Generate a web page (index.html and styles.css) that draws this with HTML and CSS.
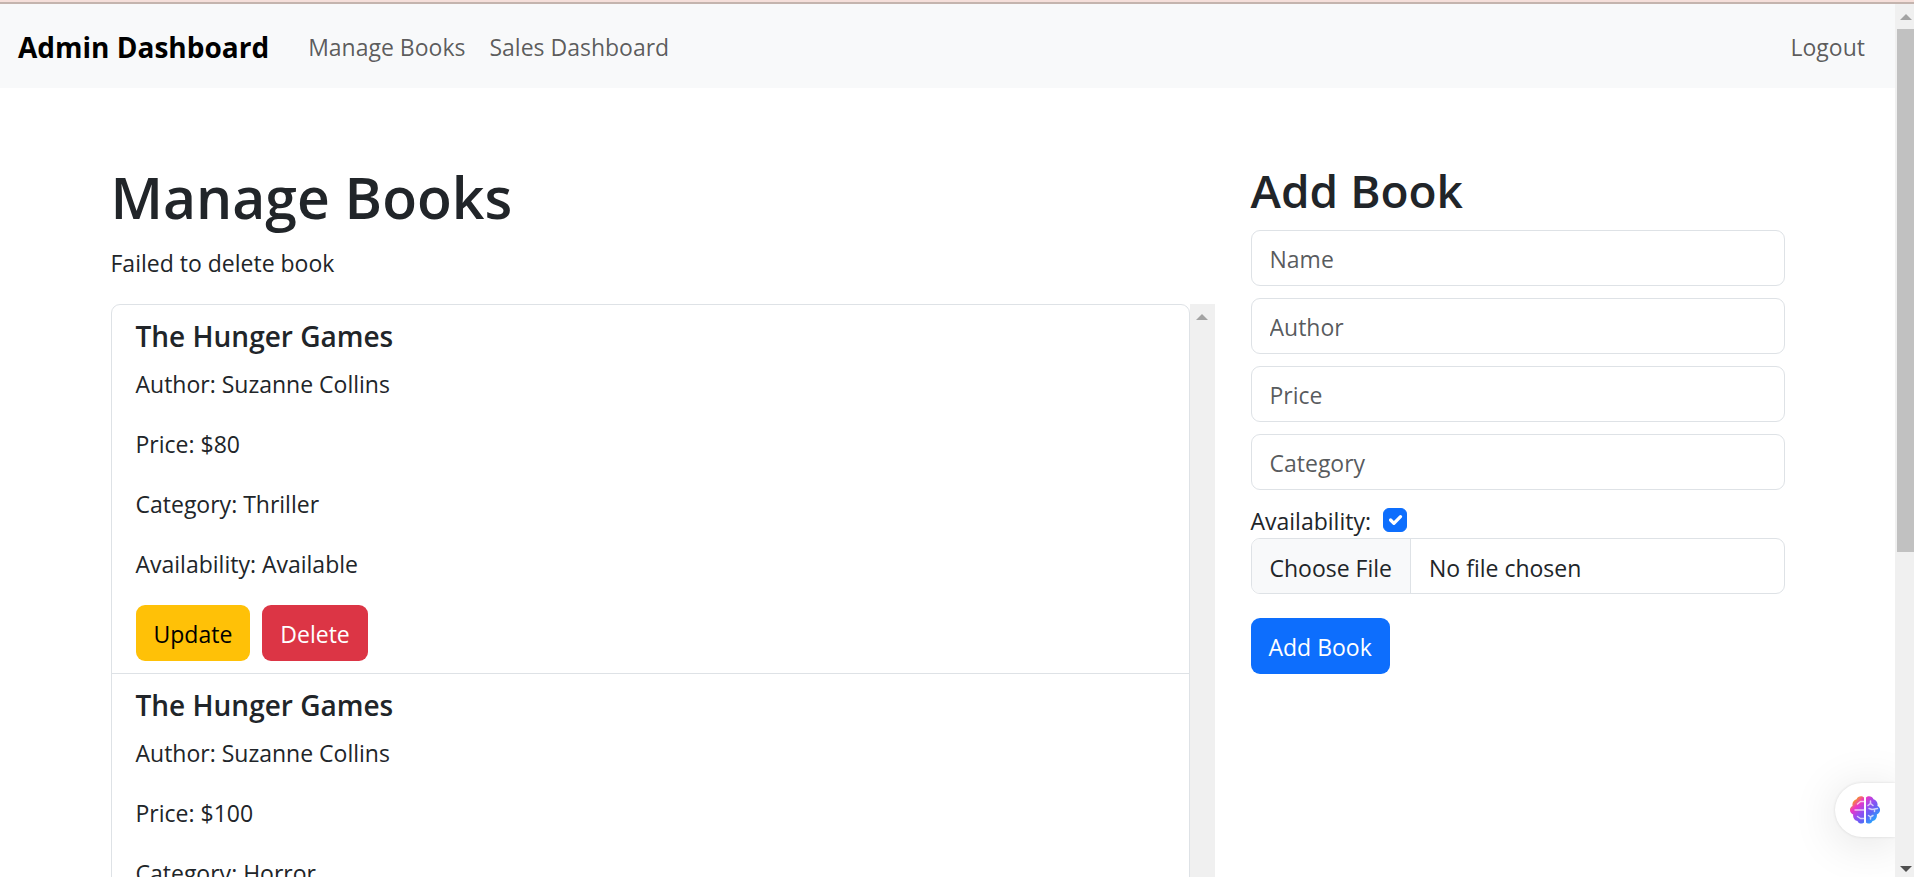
FILE: index.html
```html
<!DOCTYPE html>
<html lang="en">
<head>
<meta charset="utf-8">
<title>Admin Dashboard</title>
<link rel="stylesheet" href="styles.css">
</head>
<body>
<div class="frame-edge"></div>
<div class="viewport">
  <div class="page">
    <nav class="navbar">
      <a class="brand" href="#">Admin Dashboard</a>
      <a class="nav-link" href="#">Manage Books</a>
      <a class="nav-link" href="#">Sales Dashboard</a>
      <a class="nav-link nav-end" href="#">Logout</a>
    </nav>
    <main class="container">
      <section class="books">
        <h1>Manage Books</h1>
        <p>Failed to delete book</p>
        <div class="scroll-area">
          <ul class="list">
            <li class="item">
              <h5>The Hunger Games</h5>
              <p>Author: Suzanne Collins</p>
              <p>Price: $80</p>
              <p>Category: Thriller</p>
              <p>Availability: Available</p>
              <div class="actions">
                <button class="btn btn-warning" type="button">Update</button>
                <button class="btn btn-danger" type="button">Delete</button>
              </div>
            </li>
            <li class="item">
              <h5>The Hunger Games</h5>
              <p>Author: Suzanne Collins</p>
              <p>Price: $100</p>
              <p>Category: Horror</p>
              <p>Availability: Available</p>
              <div class="actions">
                <button class="btn btn-warning" type="button">Update</button>
                <button class="btn btn-danger" type="button">Delete</button>
              </div>
            </li>
          </ul>
          <div class="scrollbar list-scrollbar"><span class="arrow arrow-up"></span></div>
        </div>
      </section>
      <section class="add">
        <h2>Add Book</h2>
        <form class="form">
          <input class="control" type="text" placeholder="Name" aria-label="Name">
          <input class="control" type="text" placeholder="Author" aria-label="Author">
          <input class="control" type="text" placeholder="Price" aria-label="Price">
          <input class="control" type="text" placeholder="Category" aria-label="Category">
          <div class="check-row">
            <label for="available">Availability:</label>
            <input class="check" id="available" type="checkbox" checked>
          </div>
          <input class="control file" type="file" aria-label="Book image">
          <button class="btn btn-primary" type="submit">Add Book</button>
        </form>
      </section>
    </main>
    <button class="assistant" type="button" aria-label="Assistant">
      <svg width="30" height="28" viewBox="0 0 30 28" aria-hidden="true">
        <defs>
          <linearGradient id="g" x1="4" y1="2" x2="26" y2="25" gradientUnits="userSpaceOnUse">
            <stop offset="0.04" stop-color="#f79a1e"/>
            <stop offset="0.24" stop-color="#ee35c4"/>
            <stop offset="0.48" stop-color="#9a4df0"/>
            <stop offset="0.7" stop-color="#5f63f5"/>
            <stop offset="1" stop-color="#1fb0ff"/>
          </linearGradient>
        </defs>
        <path fill="url(#g)" d="M14 1.500V26.500C12.500 28.300 8.500 28 7.500 25C4.500 24.500 2.500 21.500 3.200 18.500C-1 16.500-1 11.500 2.600 10C1.800 7 3.600 4 6.500 3.300C7.500 0 12-.8 14 1.500ZM16 1.500C18-.8 22.500 0 23.500 3.300C26.400 4 28.200 7 27.400 10C31 11.500 31 16.500 26.800 18.500C27.500 21.500 25.500 24.500 22.500 25C21.500 28 17.500 28.300 16 26.500Z"/>
        <g fill="none" stroke="#fff" stroke-opacity=".7" stroke-width="1.500" stroke-linecap="round" stroke-linejoin="round">
          <path d="M14 5.500H10.500L7.500 8M14 14H5M14 22.500H10.500L7.500 20.500M20.500 5V7.500M18 9.500L20.500 7.500L23 9.500M19 12.500L22 13.500L27.500 12.500M24.500 13.500V15.500M20.500 23V21L18.500 19.500M20.500 21L23 19.500"/>
        </g>
      </svg>
    </button>
  </div>
  <div class="scrollbar page-scrollbar">
    <span class="arrow arrow-up"></span>
    <span class="thumb"></span>
    <span class="arrow arrow-down"></span>
  </div>
</div>
</body>
</html>
```
FILE: styles.css
```css
* { box-sizing: border-box; }

body {
  margin: 0;
  height: 100vh;
  overflow: hidden;
  display: flex;
  flex-direction: column;
  font: 400 23px/38px "Open Sans", "Noto Sans", sans-serif;
  color: #212529;
  background: #fff;
}

h1, h2, h5, p { margin: 0; }
h1, h2, h5 { font-weight: 600; margin-bottom: 10px; }
h1 { font-size: 57px; line-height: 74px; }
h2 { font-size: 46px; line-height: 60px; }
h5 { font-size: 28px; line-height: 38px; }
p { margin-bottom: 22px; }

.frame-edge {
  flex: none;
  height: 4px;
  background: #f5dfda;
  border-bottom: 2px solid #c4b4ae;
}

.viewport { flex: 1; min-height: 0; display: flex; }
.page { flex: 1; min-width: 0; position: relative; overflow: hidden; }

.navbar {
  display: flex;
  align-items: center;
  height: 84px;
  padding: 2px 18px 0;
  background: #f8f9fa;
}
.brand {
  margin-right: 27px;
  font-size: 28px;
  font-weight: 700;
  color: #000;
  text-decoration: none;
}
.nav-link { padding: 0 12px; color: rgba(0, 0, 0, .65); text-decoration: none; }
.nav-end { margin-left: auto; }

.container {
  display: grid;
  grid-template-columns: 2fr 1fr;
  max-width: 1710px;
  margin: 0 auto;
  padding-top: 72px;
}
.books, .add { padding: 0 18px; min-width: 0; }

.scroll-area { display: flex; }
.list {
  flex: 1;
  margin: 0;
  padding: 0;
  list-style: none;
  border: 1px solid #dee2e6;
  border-radius: 9px;
}
.item { padding: 12px 24px; }
.item + .item { border-top: 1px solid #dee2e6; }
.actions { display: flex; gap: 12px; }

.btn {
  height: 56px;
  padding: 2px 18px 0;
  border: 0;
  border-radius: 9px;
  font: inherit;
  color: #fff;
}
.btn-warning { background: #ffc107; color: #000; }
.btn-danger { background: #dc3545; }
.btn-primary { background: #0d6efd; margin-top: 24px; }

.control {
  display: block;
  width: 100%;
  height: 56px;
  margin-bottom: 12px;
  padding: 2px 18px 0;
  border: 1px solid #dee2e6;
  border-radius: 9px;
  font: inherit;
  color: #212529;
  background: #fff;
}
.control::placeholder { color: rgba(33, 37, 41, .75); }

.check-row { display: flex; align-items: center; gap: 12px; height: 36px; }
.check-row label { padding-top: 2px; }
.check {
  appearance: none;
  width: 24px;
  height: 24px;
  margin: 0;
  border: 1px solid #dee2e6;
  border-radius: 6px;
}
.check:checked {
  border-color: #0d6efd;
  background: #0d6efd url("data:image/svg+xml,%3csvg xmlns='http://www.w3.org/2000/svg' viewBox='0 0 20 20'%3e%3cpath fill='none' stroke='%23fff' stroke-linecap='round' stroke-linejoin='round' stroke-width='3' d='m6 10 3 3 6-6'/%3e%3c/svg%3e") center / contain no-repeat;
}

.file { margin: 0; padding: 0; overflow: hidden; line-height: 54px; }
.file::file-selector-button {
  height: 54px;
  margin: 0 18px 0 0;
  padding: 2px 18px 0;
  border: 0;
  border-right: 1px solid #dee2e6;
  font: inherit;
  color: #212529;
  background: #f8f9fa;
}

.scrollbar {
  flex: none;
  display: flex;
  flex-direction: column;
  align-items: center;
  background: #f0f0f0;
}
.list-scrollbar { width: 25px; padding-top: 10px; }
.page-scrollbar { width: 19px; padding: 10px 0 5px 2px; }
.arrow { border: 6px solid transparent; }
.arrow-up { border-top: 0; border-bottom-color: #a3a3a3; }
.arrow-down { border-bottom: 0; border-top-color: #505050; margin-top: auto; }
.thumb { width: 100%; height: 61%; margin-top: 9px; background: #c1c1c1; }

.assistant {
  position: absolute;
  right: 0;
  bottom: 40px;
  display: flex;
  align-items: center;
  width: 60px;
  height: 54px;
  padding: 0 0 0 15px;
  border: 0;
  border-radius: 27px 0 0 27px;
  background: #fff;
  box-shadow: 0 0 3px rgba(0, 0, 0, .12), 0 6px 48px rgba(0, 0, 0, .12);
}
```
